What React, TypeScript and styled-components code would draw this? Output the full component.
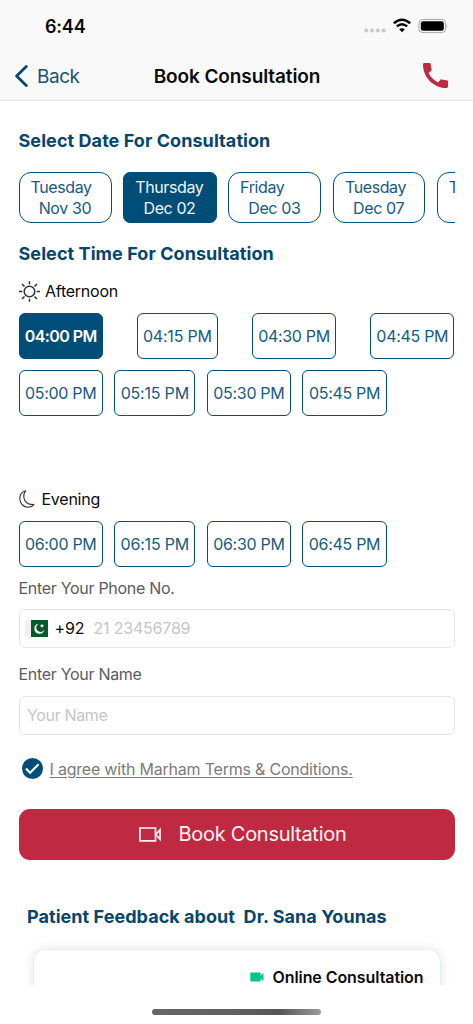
import React from "react";
import styled, { createGlobalStyle } from "styled-components";

const navy = "#004e78";
const ink = "#07456a";
const crimson = "#c02942";

const Global = createGlobalStyle`
  * { box-sizing: border-box; }
  body { margin: 0; background: #fff; font-family: Inter, "Liberation Sans", sans-serif; color: #0b0b0b; }
`;

const Screen = styled.main`
  width: 473px;
  height: 1024px;
  display: flex;
  flex-direction: column;
  overflow: hidden;
  background: #fff;
`;

const Header = styled.header`
  height: 101px;
  flex: none;
  background: #f9f9f9;
  border-bottom: 1px solid #e2e2e3;
`;

const StatusBar = styled.div`
  height: 52px;
  padding: 0 25px 0 45px;
  display: flex;
  align-items: center;
  justify-content: space-between;
`;

const Clock = styled.span`
  font-size: 18px;
  font-weight: 600;
  letter-spacing: -0.2px;
`;

const StatusIcons = styled.div`
  display: flex;
  align-items: center;
`;

const NavBar = styled.div`
  height: 48px;
  padding: 0 25px 0 15px;
  display: grid;
  grid-template-columns: 100px 1fr 90px;
  align-items: center;
`;

const Back = styled.div`
  display: flex;
  align-items: center;
  gap: 9px;
  color: #1a5277;
  font-size: 19px;
  letter-spacing: -0.45px;
`;

const Title = styled.h1`
  margin: 0 0 0 1px;
  text-align: center;
  font-size: 19px;
  font-weight: 600;
  letter-spacing: -0.1px;
  white-space: nowrap;
`;

const Phone = styled.div`
  display: flex;
  justify-content: flex-end;
  padding-bottom: 2px;
`;

const Content = styled.div`
  height: 884px;
  flex: none;
  padding: 0 18.5px;
  overflow: hidden;
`;

const Heading = styled.h2<{ $top: number; $indent?: number; $tracking?: number }>`
  margin: 0;
  padding: ${(p) => p.$top}px 0 0 ${(p) => p.$indent ?? 0}px;
  font-size: 18px;
  line-height: 24px;
  font-weight: 700;
  color: ${ink};
  letter-spacing: ${(p) => p.$tracking ?? 0.07}px;
  white-space: pre;
`;

const DateStrip = styled.div`
  display: flex;
  gap: 11.5px;
  height: 51.5px;
  margin-top: 18.5px;
  overflow: hidden;
`;

const DateChip = styled.div<{ $active?: boolean; $width?: number }>`
  flex: none;
  width: ${(p) => p.$width ?? 93.3}px;
  height: 51.5px;
  padding: 4.5px 0 0 11px;
  border: 1px solid ${navy};
  border-radius: ${(p) => (p.$active ? 7 : 12)}px;
  background: ${(p) => (p.$active ? navy : "#fff")};
  color: ${(p) => (p.$active ? "#f2f6f9" : "#175a82")};
  font-size: 16px;
  line-height: 20.5px;
  letter-spacing: -0.4px;
  white-space: pre;
`;

const PeriodLabel = styled.div<{ $height: number; $gap: number; $top?: number; $bottom?: number }>`
  height: ${(p) => p.$height}px;
  padding: ${(p) => p.$top ?? 0}px 0 ${(p) => p.$bottom ?? 0}px;
  display: flex;
  align-items: center;
  gap: ${(p) => p.$gap}px;
  font-size: 16px;
  letter-spacing: -0.25px;
`;

const TimeRow = styled.div<{ $spread?: boolean }>`
  display: flex;
  gap: ${(p) => (p.$spread ? 0 : 11.3)}px;
  justify-content: ${(p) => (p.$spread ? "space-between" : "flex-start")};
`;

const TimeChip = styled.div<{ $active?: boolean; $narrow?: boolean }>`
  width: ${(p) => (p.$narrow ? 81.2 : 84.4)}px;
  height: 46px;
  display: flex;
  align-items: center;
  justify-content: center;
  border: 1px solid ${navy};
  border-radius: 6px;
  background: ${(p) => (p.$active ? navy : "#fff")};
  color: ${(p) => (p.$active ? "#fff" : "#175a82")};
  font-size: 16px;
  font-weight: ${(p) => (p.$active ? 600 : 400)};
  letter-spacing: ${(p) => (p.$active ? -0.55 : p.$narrow ? -0.2 : -0.3)}px;
  white-space: nowrap;
`;

const FieldLabel = styled.label<{ $height: number; $top?: number }>`
  height: ${(p) => p.$height}px;
  padding-top: ${(p) => p.$top ?? 0}px;
  display: flex;
  align-items: center;
  color: #5b5b5b;
  font-size: 16px;
  letter-spacing: -0.3px;
`;

const Field = styled.div`
  height: 39.5px;
  display: flex;
  align-items: center;
  padding: 0 7.5px;
  border: 1px solid #e6e6e6;
  border-radius: 6px;
  font-size: 16px;
`;

const Flag = styled.svg`
  margin-left: -2px;
`;

const DialCode = styled.span`
  margin-left: 6.5px;
  letter-spacing: -0.1px;
`;

const Placeholder = styled.span<{ $left?: number; $tracking: number }>`
  margin-left: ${(p) => p.$left ?? 0}px;
  color: #c5c5c7;
  letter-spacing: ${(p) => p.$tracking}px;
`;

const Terms = styled.div`
  height: 73.5px;
  padding: 0 0 6px 3px;
  display: flex;
  align-items: center;
  gap: 7px;
  color: #7b7b7b;
  font-size: 16px;
  letter-spacing: -0.21px;
  span {
    text-decoration: underline;
    text-decoration-thickness: 1px;
    text-underline-offset: 2px;
    text-decoration-skip-ink: auto;
  }
`;

const BookButton = styled.button`
  width: 436px;
  height: 51px;
  padding: 0 0 0 12px;
  display: flex;
  align-items: center;
  justify-content: center;
  gap: 18px;
  border: 0;
  border-radius: 11px;
  background: ${crimson};
  color: #fff4f5;
  font: 400 20px Inter, sans-serif;
  letter-spacing: -0.28px;
`;

const FeedbackCard = styled.div`
  width: 408px;
  height: 80px;
  margin: 19.5px 0 0 14px;
  padding: 16px 16px 0 0;
  display: flex;
  align-items: flex-start;
  justify-content: flex-end;
  gap: 8px;
  border: 1px solid #e6edf3;
  border-radius: 12px;
  background: #fff;
  box-shadow: 0 0 12px rgba(0, 0, 0, 0.1);
  font-size: 16px;
  line-height: 22px;
  font-weight: 600;
  letter-spacing: -0.07px;
  svg { margin-top: 6px; }
`;

const HomeArea = styled.footer`
  flex: 1;
  display: flex;
  justify-content: center;
  align-items: flex-start;
  padding-top: 23.5px;
  background: #fff;
`;

const HomeIndicator = styled.div`
  width: 169px;
  height: 6px;
  border-radius: 3px;
  background: linear-gradient(90deg, #666 0%, #606060 50%, #555 75%, #9b9b9b 100%);
`;

const dates = [
  { day: "Tuesday", date: "  Nov 30" },
  { day: "Thursday", date: "  Dec 02" },
  { day: "Friday", date: "  Dec 03" },
  { day: "Tuesday", date: "  Dec 07", width: 92.3 },
  { day: "T", date: "" },
];

function Times({ hour, spread, active }: { hour: string; spread?: boolean; active?: string }) {
  return (
    <TimeRow $spread={spread}>
      {["00", "15", "30", "45"].map((m) => (
        <TimeChip key={m} $narrow={m === "15"} $active={m === active}>
          {`${hour}:${m} PM`}
        </TimeChip>
      ))}
    </TimeRow>
  );
}

const AfternoonRows = styled.div`
  height: 173.5px;
  display: flex;
  flex-direction: column;
  gap: 11px;
`;

function SunIcon() {
  return (
    <svg width="21" height="21" viewBox="0 0 21 21" fill="none" stroke="#333" strokeWidth="1.5">
      <circle cx="10.5" cy="10.5" r="5.3" />
      <path d="M10.5 0.3v3M10.5 17.7v3M0 10.5h3.3M17.7 10.5H21M3 3l2.5 2.5M15.500 15.500L18 18M3 18l2.500-2.500M15.500 5.500L18 3" />
    </svg>
  );
}

function MoonIcon() {
  return (
    <svg width="16" height="18" viewBox="0 0 16 18" fill="none" stroke="#333" strokeWidth="1.1" strokeLinejoin="round">
      <path d="M6.6 0.8C3 1.8 0.8 5 0.8 8.7c0 4.8 3.7 8.500 8.200 8.500 2.400 0 4.600-1 6-2.800C9.500 15.200 5.300 12 4.800 7.500 4.500 5 5.100 2.600 6.600 .8Z" />
    </svg>
  );
}

export default function App() {
  return (
    <Screen>
      <Global />
      <Header>
        <StatusBar>
          <Clock>6:44</Clock>
          <StatusIcons>
            <svg width="84" height="20" viewBox="0 0 84 20">
              <g fill="#c8c8c8">
                <circle cx="2.2" cy="14.500" r="2" />
                <circle cx="8" cy="14.500" r="2" />
                <circle cx="13.800" cy="14.500" r="2" />
                <circle cx="19.600" cy="14.500" r="2" />
              </g>
              <g fill="none" stroke="#080808" strokeWidth="2.500">
                <path d="M29.800 7.200Q38 .3 46.200 7.200" />
                <path d="M32.800 10.400Q38 6 43.200 10.400" />
              </g>
              <path d="M38 16.200L35.200 13.300Q38 11.200 40.800 13.300Z" fill="#080808" />
              <rect x="54.900" y="3.400" width="26.700" height="13.200" rx="4" fill="none" stroke="#a6a6a6" />
              <rect x="56.800" y="5.200" width="23" height="9.600" rx="2.300" fill="#000" />
              <path d="M82.600 8q1.500 2 0 4Z" fill="#aaa" />
            </svg>
          </StatusIcons>
        </StatusBar>
        <NavBar>
          <Back>
            <svg width="13" height="22" viewBox="0 0 13 22" fill="none" stroke="#07496f" strokeWidth="2.800" strokeLinecap="round" strokeLinejoin="round">
              <path d="M11.300 1.500L1.600 11l9.700 9.500" />
            </svg>
            Back
          </Back>
          <Title>Book Consultation</Title>
          <Phone>
            <svg width="25" height="25" viewBox="3 3 18 18" fill={crimson}>
              <path d="M20.010 15.380c-1.230 0-2.420-.2-3.530-.56a.977.977 0 0 0-1.010.24l-1.570 1.970c-2.830-1.350-5.480-3.900-6.890-6.830l1.950-1.660c.27-.28.350-.67.240-1.020-.37-1.110-.56-2.300-.56-3.530 0-.54-.45-.99-.99-.99H4.190C3.650 3 3 3.240 3 3.990 3 13.280 10.730 21 20.010 21c.71 0 .99-.63.99-1.180v-3.450c0-.54-.45-.99-.99-.99z" />
            </svg>
          </Phone>
        </NavBar>
      </Header>

      <Content>
        <Heading $top={28}>Select Date For Consultation</Heading>
        <DateStrip>
          {dates.map(({ day, date, width }, i) => (
            <DateChip key={i} $active={i === 1} $width={width}>
              {day}
              {"\n"}
              {date}
            </DateChip>
          ))}
        </DateStrip>
        <Heading $top={19}>Select Time For Consultation</Heading>
        <PeriodLabel $height={47} $gap={5.5} $top={3}>
          <SunIcon />
          Afternoon
        </PeriodLabel>
        <AfternoonRows>
          <Times hour="04" spread active="00" />
          <Times hour="05" />
        </AfternoonRows>
        <PeriodLabel $height={34} $gap={7} $bottom={9}>
          <MoonIcon />
          Evening
        </PeriodLabel>
        <Times hour="06" />
        <FieldLabel $height={42}>Enter Your Phone No.</FieldLabel>
        <Field>
          <Flag width="23" height="17" viewBox="0 0 23 17">
            <rect width="6" height="17" fill="#f0f0f0" />
            <rect x="6" width="17" height="17" fill="#07592c" />
            <path d="M13.800 3.700A5 5 0 1 0 19.300 9.700A4.300 4.300 0 1 1 13.800 3.700Z" fill="#fff" />
            <path d="M17 3.800l.6 1.300 1.500.1-1.100 1 .3 1.400-1.300-.7-1.300.7.300-1.400-1.100-1 1.500-.1Z" fill="#fff" />
          </Flag>
          <DialCode>+92</DialCode>
          <Placeholder $left={9} $tracking={-0.2}>21 23456789</Placeholder>
        </Field>
        <FieldLabel $height={47.5} $top={3.5}>
          Enter Your Name
        </FieldLabel>
        <Field>
          <Placeholder $tracking={-0.35}>Your Name</Placeholder>
        </Field>
        <Terms>
          <svg width="21" height="21" viewBox="0 0 21 21">
            <circle cx="10.500" cy="10.500" r="10.500" fill={navy} />
            <path d="M4 10.600l4.100 4.100 8.500-8.500" fill="none" stroke="#fff" strokeWidth="2.200" />
          </svg>
          <span>I agree with Marham Terms &amp; Conditions.</span>
        </Terms>
        <BookButton>
          <svg width="22" height="15" viewBox="0 0 22 15" fill="none" stroke="#fff4f5" strokeWidth="1.700">
            <path d="M.9 1h15.600v12.800H.9Z" />
            <path d="M21 2.800v9.400l-4.200-4.700Z" />
          </svg>
          Book Consultation
        </BookButton>
        <Heading $top={45.5} $indent={8.5} $tracking={0.05}>
          {"Patient Feedback about  Dr. Sana Younas"}
        </Heading>
        <FeedbackCard>
          <svg width="14" height="10" viewBox="0 0 14 10" fill="#09c58a">
            <path d="M1 .5h9q.7 0 .7.700v2.300L13.500 1v8l-2.800-2.500v2.300q0 .7-.7.700H1q-.7 0-.7-.7V1.200Q.3.500 1 .5Z" />
          </svg>
          Online Consultation
        </FeedbackCard>
      </Content>
      <HomeArea>
        <HomeIndicator />
      </HomeArea>
    </Screen>
  );
}
